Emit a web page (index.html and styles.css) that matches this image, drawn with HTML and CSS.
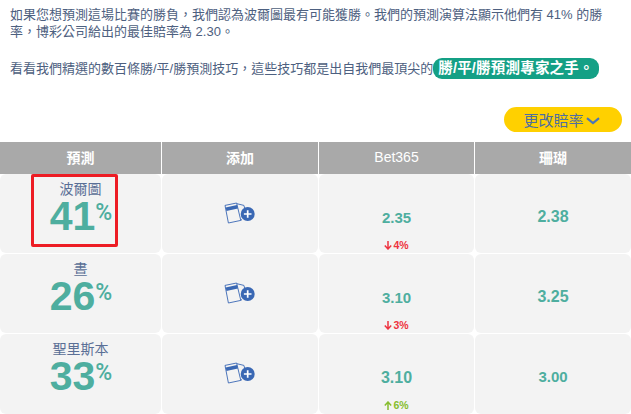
FILE: index.html
```html
<!DOCTYPE html>
<html lang="zh-Hant">
<head>
<meta charset="utf-8">
<title>預測</title>
<link rel="stylesheet" href="styles.css">
</head>
<body>
<svg class="defs" width="0" height="0" aria-hidden="true">
  <symbol id="add" viewBox="0 0 32 22">
    <path d="M12.5 1.6l7.4 1.8.8 3M16 18.2l2-.5" fill="none" stroke="#3a68b4" stroke-width=".9"/>
    <path d="M1 3.4 12.6 1l4.2 17.4L4.4 21z" fill="#f3f3f3" stroke="#3a68b4" stroke-width=".9"/>
    <path d="M1.6 5.4 13 3l.9 3.6L2.4 9z" fill="#3a68b4"/>
    <circle cx="23.7" cy="12" r="7" fill="#3a68b4"/>
    <path d="M19.9 12h7.6M23.7 8.2v7.6" stroke="#fff" stroke-width="1.7"/>
  </symbol>
  <symbol id="arrow" viewBox="0 0 8 9">
    <path d="M4 0v8M.8 4.6 4 8l3.2-3.4" fill="none" stroke="currentColor" stroke-width="1.5"/>
  </symbol>
</svg>
<section class="intro">
  <p>如果您想預測這場比賽的勝負，我們認為波爾圖最有可能獲勝。我們的預測演算法顯示他們有 41% 的勝率，博彩公司給出的最佳賠率為 2.30。</p>
  <p class="second">看看我們精選的數百條勝/平/勝預測技巧，這些技巧都是出自我們最頂尖的<span class="pill">勝/平/勝預測專家之手。</span></p>
</section>
<div class="actions">
  <button class="odds-btn" type="button">更改賠率<svg class="chev" viewBox="0 0 14 8" width="14" height="8"><path d="M1 1.2 7 6l6-4.8" fill="none" stroke="#4a76b8" stroke-width="2.2"/></svg></button>
</div>
<div class="table">
  <div class="head">預測</div>
  <div class="head">添加</div>
  <div class="head head-latin">Bet365</div>
  <div class="head">珊瑚</div>

  <div class="cell predict highlight">
    <div class="team">波爾圖</div>
    <div class="pct">41<span>%</span></div>
  </div>
  <div class="cell icon"><svg width="32" height="22"><use href="#add"/></svg></div>
  <div class="cell odds"><b>2.35</b><small class="down"><svg width="8" height="9"><use href="#arrow"/></svg>4%</small></div>
  <div class="cell plain"><b>2.38</b></div>

  <div class="cell predict">
    <div class="team">晝</div>
    <div class="pct">26<span>%</span></div>
  </div>
  <div class="cell icon"><svg width="32" height="22"><use href="#add"/></svg></div>
  <div class="cell odds"><b>3.10</b><small class="down"><svg width="8" height="9"><use href="#arrow"/></svg>3%</small></div>
  <div class="cell plain"><b>3.25</b></div>

  <div class="cell predict">
    <div class="team">聖里斯本</div>
    <div class="pct">33<span>%</span></div>
  </div>
  <div class="cell icon"><svg width="32" height="22"><use href="#add"/></svg></div>
  <div class="cell odds"><b class="wide">3.10</b><small class="up"><svg class="flip" width="8" height="9"><use href="#arrow"/></svg>6%</small></div>
  <div class="cell plain"><b class="narrow">3.00</b></div>
</div>
</body>
</html>
```

FILE: styles.css
```css
*, *::after { box-sizing: border-box; }
html, body { margin: 0; padding: 0; height: 414px; overflow: hidden; background: #fff; }
body { font-family: "Liberation Sans", "Noto Sans CJK TC", sans-serif; color: #4d6080; }
.defs { position: absolute; }
.intro { padding: 6px 10px 0; font-size: 13px; line-height: 17px; height: 92px; }
.intro p { margin: 0; }
.intro .second { margin-top: 18px; }
.pill { display: inline-block; background: #14a085; color: #fff; font-weight: 700; font-size: 14.5px; line-height: 20px; height: 21px; padding: 0 5px; border-radius: 9px; letter-spacing: .2px; }
.actions { display: flex; justify-content: flex-end; padding-right: 9px; height: 50px; padding-top: 15px; }
.odds-btn { display: flex; align-items: center; justify-content: center; gap: 2px; width: 118px; height: 25px; border: 0; border-radius: 13px; background: #ffd000; color: #4f6f9f; font: 15px "Liberation Sans", "Noto Sans CJK TC", sans-serif; padding: 0 3px 0 0; }
.chev { margin-top: 3px; }
.table { display: grid; grid-template-columns: 161px 156px 155px 156px; column-gap: 1px; grid-template-rows: 31px 79px 79px 80px; row-gap: 1px; }
.head { background: #a9a9a9; color: #fff; font-size: 14px; font-weight: 700; display: flex; align-items: center; justify-content: center; margin-bottom: -1px; padding-bottom: 2px; }
.head-latin { font-weight: 400; }
.cell { background: #f3f3f3; border-radius: 6px; position: relative; }
.predict { display: flex; flex-direction: column; align-items: center; padding-top: 8px; }
.team { font-size: 14px; line-height: 15px; color: #5a6f96; }
.pct { font-size: 41px; line-height: 38px; font-weight: 700; color: #4eae9f; display: flex; align-items: flex-start; padding-left: 1px; }
.pct span { font-family: Roboto, "Liberation Sans", sans-serif; font-size: 23px; line-height: 20px; font-weight: 500; margin-left: 0; margin-top: 6px; }
.highlight::after { content: ""; position: absolute; left: 31px; top: 0; width: 87px; height: 73px; border: 3px solid #ed1c24; border-radius: 2px; }
.icon { display: flex; justify-content: center; padding-top: 28px; }
.odds, .plain { display: flex; flex-direction: column; align-items: center; color: #4eae9f; }
.odds { padding-top: 35px; }
.plain { padding-top: 34px; }
.odds b { font-size: 15px; line-height: 17px; }
.plain b { font-size: 16px; line-height: 18px; }
.odds b.wide { font-size: 16px; }
.plain b.narrow { font-size: 15px; }
.odds small { font-size: 10.5px; line-height: 12px; margin-top: 13px; font-weight: 700; display: flex; align-items: center; gap: 1px; }
.flip { transform: rotate(180deg); }
.down { color: #ee3340; }
.up { color: #86bd2e; }
```
